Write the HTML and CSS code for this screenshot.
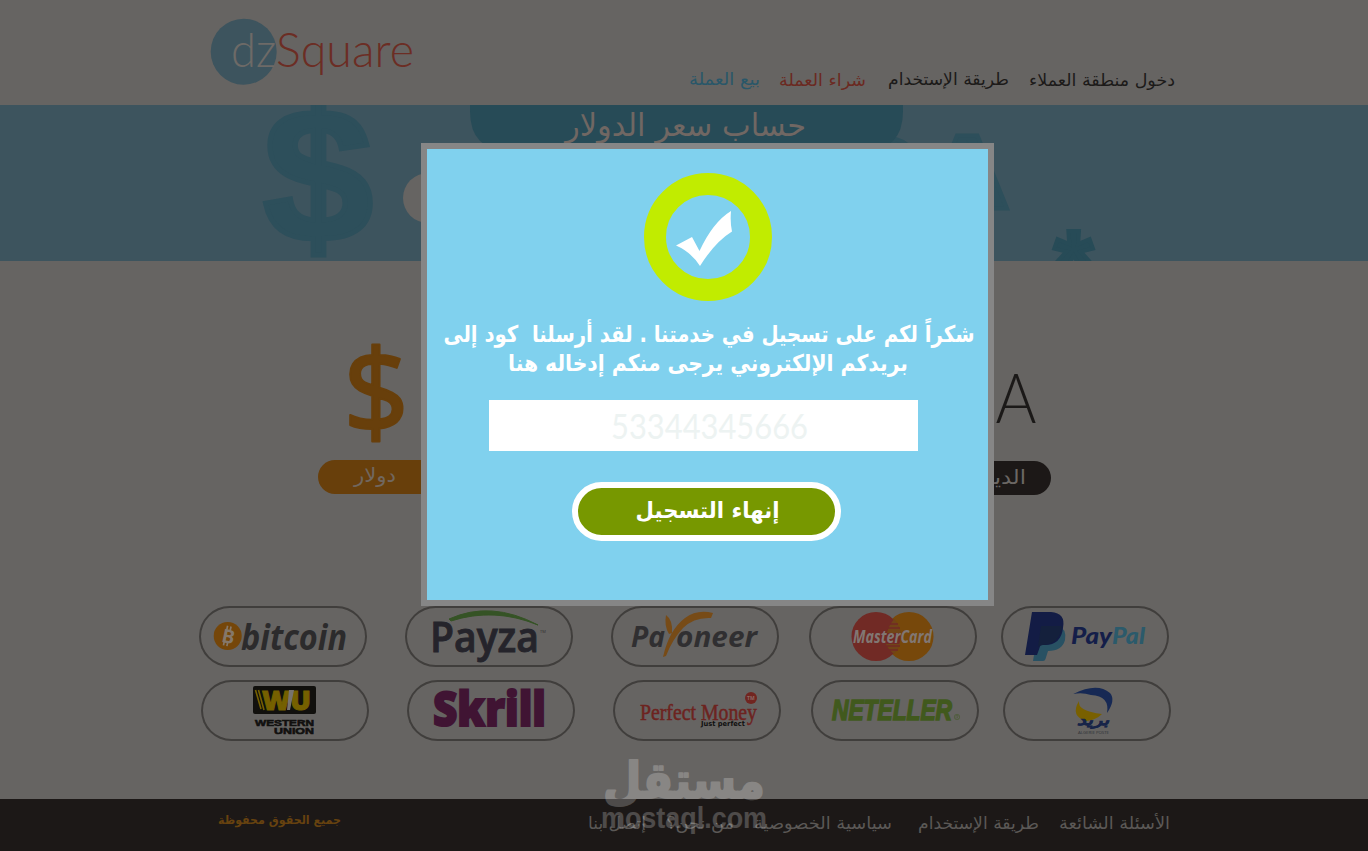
FILE: index.html
```html
<!DOCTYPE html>
<html lang="ar">
<head>
<meta charset="utf-8">
<title>dzSquare</title>
<link rel="stylesheet" href="styles.css">
</head>
<body>
<div class="page">
  <header class="header">
    <svg class="logo" width="204" height="70">
      <circle class="logo-disc" cx="32.7" cy="33.7" r="33"/>
      <text class="logo-dz" x="20" y="49" textLength="45" lengthAdjust="spacingAndGlyphs">dz</text>
      <text class="logo-square" x="65" y="49" textLength="138" lengthAdjust="spacingAndGlyphs">Square</text>
    </svg>
    <nav class="nav">
      <svg class="ar nav-blue" width="71" height="26"><text x="35.5" y="17" textLength="71" lengthAdjust="spacingAndGlyphs">بيع العملة</text></svg>
      <svg class="ar nav-red" width="87" height="26"><text x="43.5" y="18" textLength="87" lengthAdjust="spacingAndGlyphs">شراء العملة</text></svg>
      <svg class="ar nav-dark" width="121" height="26"><text x="60.5" y="17" textLength="121" lengthAdjust="spacingAndGlyphs">طريقة الإستخدام</text></svg>
      <svg class="ar nav-dark" width="146" height="26"><text x="73" y="18" textLength="146" lengthAdjust="spacingAndGlyphs">دخول منطقة العملاء</text></svg>
    </nav>
  </header>

  <section class="banner">
    <svg width="1368" height="156">
      <text class="ghost ghost-dollar" x="263" y="136" textLength="110" lengthAdjust="spacingAndGlyphs">$</text>
      <text class="ghost ghost-da" x="839" y="104" textLength="171" lengthAdjust="spacingAndGlyphs">DA</text>
      <text class="ghost-star" x="1054" y="194" textLength="39" lengthAdjust="spacingAndGlyphs">*</text>
      <circle class="banner-field" cx="428" cy="93" r="25"/>
      <path class="banner-tab" d="M470 0H903V6Q903 46 863 46H510Q470 46 470 6Z"/>
      <text class="ar-text banner-title" x="685.5" y="31" textLength="241" lengthAdjust="spacingAndGlyphs">حساب سعر الدولار</text>
    </svg>
  </section>

  <main class="main">
    <div class="currencies">
      <div class="currency">
        <svg width="210" height="199">
          <text class="sign-dollar" x="25" y="174" textLength="66" lengthAdjust="spacingAndGlyphs">$</text>
        </svg>
        <div class="pill pill-orange"><svg class="ar" width="42" height="34"><text x="21" y="22" textLength="42" lengthAdjust="spacingAndGlyphs">دولار</text></svg></div>
      </div>
      <div class="currency currency-right">
        <svg width="175" height="200">
          <text class="sign-da" x="73" y="162" textLength="87.500" lengthAdjust="spacingAndGlyphs">DA</text>
        </svg>
        <div class="pill pill-dark"><svg class="ar" width="56" height="34"><text x="28" y="23" textLength="56" lengthAdjust="spacingAndGlyphs">الدينار</text></svg></div>
      </div>
    </div>

    <div class="methods">
      <div class="row">
        <div class="method"><svg width="168" height="61">
          <circle cx="28.7" cy="30" r="14" fill="#754609"/>
          <g transform="rotate(12 28.7 30)"><text class="coin" x="23.2" y="37">B</text><path d="M26.5 20v4M30 20v4M26.5 36v4M30 36v4" stroke="#85786a" stroke-width="1.7"/></g>
          <text class="bitcoin" x="42" y="43.5" textLength="106" lengthAdjust="spacingAndGlyphs">bitcoin</text>
        </svg></div>
        <div class="method"><svg width="168" height="61">
          <text class="payza" x="25" y="46" textLength="109" lengthAdjust="spacingAndGlyphs">Payza</text>
          <path d="M44 13Q86-6 133 19Q89 1 46 15Z" fill="#355325" stroke="#355325"/>
          <text class="tiny" x="135" y="27">TM</text>
        </svg></div>
        <div class="method"><svg width="168" height="61">
          <text class="payoneer" x="20" y="41" textLength="34" lengthAdjust="spacingAndGlyphs">Pa</text>
          <text class="payoneer" x="65" y="41" textLength="81" lengthAdjust="spacingAndGlyphs">oneer</text>
          <path d="M55 9Q62 14 61 27L58 28Q53 20 55 9ZM52 51Q58 24 74 12Q86 3 102 7L100 12Q83 11 72 22Q61 34 55 50Z" fill="#774b17"/>
        </svg></div>
        <div class="method"><svg width="168" height="61">
          <circle cx="100" cy="30.5" r="24.5" fill="#77480b"/>
          <circle cx="67" cy="30.5" r="24.5" fill="#712a25"/>
          <path d="M85 13q-6 8-7 14h14q-2-8-7-14ZM77 38h14q-2 6-6 10q-6-5-8-10Z" fill="#714418"/>
          <path d="M81 18h8M79 22h12M78 40h13M80 44h9" stroke="#712a25" stroke-width="1.5"/>
          <text class="mastercard" x="44" y="37" textLength="79" lengthAdjust="spacingAndGlyphs">MasterCard</text>
        </svg></div>
        <div class="method"><svg width="168" height="61">
          <path d="M38 19H57Q66 23 64 34Q61 45 47 45L44.500 53Q44 55 42 55H32Z" fill="#285163"/>
          <path d="M31 6H50Q65 7 62 22Q60 39 44 39H41Q39 39 38.500 42L36 49H24Z" fill="#131c45"/>
          <path d="M40 20H61Q59 38 42 39Q39 39 37 41Z" fill="#14203c"/>
          <text class="paypal navy" x="70" y="38" textLength="41" lengthAdjust="spacingAndGlyphs">Pay</text>
          <text class="paypal sky" x="111" y="38" textLength="33" lengthAdjust="spacingAndGlyphs">Pal</text>
        </svg></div>
      </div>
      <div class="row row-second">
        <div class="method"><svg width="168" height="61">
          <rect x="52" y="6" width="63" height="28" rx="2" fill="#11100d"/>
          <path d="M54.500 10L60 29M57.500 10L63 30" stroke="#756000" stroke-width="1.6"/>
          <text class="wu" x="61" y="30" textLength="49" lengthAdjust="spacingAndGlyphs">WU</text>
          <path d="M88 10h5l-4 20h-3Z" fill="#77736f"/>
          <text class="western" x="54" y="45.500" textLength="59" lengthAdjust="spacingAndGlyphs">WESTERN</text>
          <text class="western" x="73" y="54" textLength="40" lengthAdjust="spacingAndGlyphs">UNION</text>
        </svg></div>
        <div class="method"><svg width="168" height="61">
          <text class="skrill" x="26" y="46" textLength="113" lengthAdjust="spacingAndGlyphs">Skrill</text>
        </svg></div>
        <div class="method"><svg width="168" height="61">
          <text class="perfect" x="27" y="39.500" textLength="117" lengthAdjust="spacingAndGlyphs">Perfect Money</text>
          <circle cx="138" cy="18" r="6" fill="#712520"/>
          <text class="tm" x="134" y="20">TM</text>
          <text class="just" x="88" y="45.500" textLength="44" lengthAdjust="spacingAndGlyphs">Just perfect</text>
        </svg></div>
        <div class="method"><svg width="168" height="61">
          <text class="neteller" x="21" y="39.500" textLength="120" lengthAdjust="spacingAndGlyphs">NETELLER</text>
          <circle cx="146" cy="37" r="2.700" fill="none" stroke="#4e5d39" stroke-width=".8"/>
          <path d="M145 39v-3.500h2v1.500h-1l1.500 2" fill="none" stroke="#4e5d39" stroke-width=".6"/>
        </svg></div>
        <div class="method"><svg width="168" height="61">
          <path d="M70.300 14Q94 2 107 13Q113 20 104 33Q107 16 88 15Q79 12 70.300 14Z" fill="#172954"/>
          <path d="M76 21Q74 31 99 34Q93 40 83 41Q67 36 76 21Z" fill="#796000"/>
          <text class="ar-text poste" x="90" y="44.500" textLength="32" lengthAdjust="spacingAndGlyphs">بريد</text>
          <text class="poste-small" x="75" y="53.500" textLength="31" lengthAdjust="spacingAndGlyphs">ALGERIE POSTE</text>
        </svg></div>
      </div>
    </div>
  </main>

  <footer class="footer">
    <svg class="ar copyright" width="123" height="30"><text x="61.500" y="16" textLength="123" lengthAdjust="spacingAndGlyphs">جميع الحقوق محفوظة</text></svg>
    <div class="footer-links">
      <svg class="ar" width="58" height="30"><text x="29" y="21" textLength="58" lengthAdjust="spacingAndGlyphs">إتصل بنا</text></svg>
      <svg class="ar" width="68" height="30"><text x="34" y="21" textLength="68" lengthAdjust="spacingAndGlyphs">من نحن؟</text></svg>
      <svg class="ar" width="138" height="30"><text x="69" y="21" textLength="138" lengthAdjust="spacingAndGlyphs">سياسية الخصوصية</text></svg>
      <svg class="ar link-usage" width="121" height="30"><text x="60.500" y="21" textLength="121" lengthAdjust="spacingAndGlyphs">طريقة الإستخدام</text></svg>
      <svg class="ar" width="111" height="30"><text x="55.500" y="21" textLength="111" lengthAdjust="spacingAndGlyphs">الأسئلة الشائعة</text></svg>
    </div>
  </footer>

  <svg class="watermark" width="168" height="85">
    <text class="ar-text mark-ar" x="84" y="43" textLength="162" lengthAdjust="spacingAndGlyphs">مستقل</text>
    <text class="mark-en" x="1" y="73" textLength="166" lengthAdjust="spacingAndGlyphs">mostaql.com</text>
  </svg>

  <section class="modal">
    <svg class="badge" width="128" height="128">
      <circle cx="64" cy="64" r="53" fill="none" stroke="#c1ec00" stroke-width="22"/>
      <path d="M32 72.500L48 64L55.500 78Q69 49 87 38Q86 50 88 58.500Q71 69 56 93Q47 79 32 72.500Z" fill="#fff"/>
    </svg>
    <svg class="message" width="561" height="90">
      <text class="ar-text" x="282" y="29" textLength="531" lengthAdjust="spacingAndGlyphs">شكراً لكم على تسجيل في خدمتنا . لقد أرسلنا &#160;كود إلى</text>
      <text class="ar-text" x="281" y="58" textLength="400" lengthAdjust="spacingAndGlyphs">بريدكم الإلكتروني يرجى منكم إدخاله هنا</text>
    </svg>
    <div class="code"><svg width="429" height="51"><text x="122" y="38.500" textLength="197" lengthAdjust="spacingAndGlyphs">53344345666</text></svg></div>
    <div class="submit"><svg class="ar" width="144" height="47"><text x="72.500" y="30" textLength="144" lengthAdjust="spacingAndGlyphs">إنهاء التسجيل</text></svg></div>
  </section>
</div>
</body>
</html>
```
FILE: styles.css
```css
* { box-sizing: border-box; }
body { margin: 0; background: #666462; font-family: "DejaVu Sans", sans-serif; }
svg { display: block; overflow: visible; flex: none; }
.page { position: relative; width: 1368px; height: 851px; overflow: hidden; background: #666462; }

.ar text, .ar-text { direction: rtl; text-anchor: middle; font-family: "DejaVu Sans", sans-serif; }

.header { height: 105px; padding: 18px 193px 0 211px; display: flex; justify-content: space-between; }
.logo text { font-family: Lato, sans-serif; font-weight: 300; font-size: 47px; }
.logo-disc { fill: #3d545e; }
.logo-dz { fill: #6d6a67; }
.logo-square { fill: #6c2d24; }
.nav { display: flex; padding-top: 50px; }
.nav svg { font-size: 17px; }
.nav svg:nth-child(2) { margin-left: 19px; }
.nav svg:nth-child(3) { margin-left: 22px; }
.nav svg:nth-child(4) { margin-left: 20px; }
.nav-blue { fill: #295769; }
.nav-red { fill: #6b2921; }
.nav-dark { fill: #1c1a19; }

.banner { height: 156px; overflow: hidden; background: #3d545e; }
.ghost { fill: #2d4f5b; stroke: #2d4f5b; font-family: "Liberation Sans", Arial, sans-serif; font-weight: 700; }
.ghost-dollar { font-size: 190px; stroke-width: 5px; }
.ghost-da { font-size: 106px; stroke-width: 4px; }
.ghost-star { fill: #274b57; stroke: #274b57; stroke-width: 4px; font-family: "Liberation Sans", Arial, sans-serif; font-weight: 700; font-size: 98px; }
.banner-field { fill: #666462; }
.banner-tab { fill: #274b57; }
.banner-title { fill: #706763; font-size: 31px; }

.main { height: 538px; display: flex; flex-direction: column; }
.currencies { height: 345px; padding: 0 317px 0 318px; display: flex; justify-content: space-between; }
.sign-dollar { fill: #683f0b; stroke: #683f0b; stroke-width: 2px; stroke-linejoin: round; font-family: "Noto Sans", sans-serif; font-size: 118px; }
.sign-da { fill: #1b1918; font-family: Lato, sans-serif; font-weight: 300; font-size: 69px; }
.pill { height: 34px; border-radius: 17px; display: flex; }
.pill-orange { width: 175px; padding-left: 36px; background: #683f0b; fill: #71675f; font-size: 20px; }
.pill-dark { width: 175px; padding-right: 25px; justify-content: flex-end; background: #1c1817; fill: #6b6764; font-size: 20px; }

.methods { padding-left: 199px; display: flex; flex-direction: column; gap: 13px; }
.row { display: grid; grid-template-columns: 206px 206px 198px 192px 168px; }
.row-second { padding-left: 2px; }
.method { width: 168px; height: 61px; border-radius: 31px; box-shadow: inset 0 0 0 2px #403e3c; }
.method text { font-family: "Open Sans", sans-serif; }
.method .coin { font: 700 19px "Open Sans", sans-serif; fill: #85786a; }
.bitcoin { font-size: 36px; font-weight: 700; font-style: italic; fill: #2c2b2c; }
.payza { font-size: 41px; font-weight: 600; fill: #25242b; stroke: #25242b; stroke-width: .9px; }
.tiny { font-size: 4px; fill: #33312f; }
.payoneer { font-size: 28px; font-weight: 700; font-style: italic; fill: #302f31; }
.mastercard { font-size: 18px; font-weight: 700; font-style: italic; fill: #817773; }
.method .paypal { font-family: Lato, sans-serif; font-size: 22.5px; font-weight: 900; font-style: italic; }
.navy { fill: #141e49; }
.sky { fill: #2b5a6b; }
.wu { font-size: 27px; font-weight: 800; fill: #756000; stroke: #756000; }
.method .western { font-family: "Liberation Sans", Arial, sans-serif; font-size: 9.5px; font-weight: 700; fill: #11100f; stroke: #11100f; stroke-width: .6px; }
.skrill { font-size: 47px; font-weight: 800; fill: #401433; stroke: #401433; stroke-width: 2px; }
.method .perfect { font-family: "Liberation Serif", serif; font-size: 23px; fill: #6d231f; stroke: #6d231f; stroke-width: .5px; }
.tm { font-size: 5px; font-weight: 700; fill: #8b6b65; }
.method .just { font-family: "DejaVu Sans", sans-serif; font-size: 7px; font-weight: 700; fill: #100f0f; }
.method .neteller { font-family: "Liberation Sans", Arial, sans-serif; font-size: 30px; font-weight: 700; font-style: italic; fill: #41591d; stroke: #41591d; stroke-width: 1.6px; }
.method .poste { font-family: "DejaVu Sans", sans-serif; font-size: 14px; font-weight: 700; font-style: italic; fill: #172448; stroke: #172448; stroke-width: .5px; }
.poste-small { font-size: 4px; fill: #2e3237; }

.footer { height: 52px; padding: 0 198px 0 218px; display: flex; justify-content: space-between; align-items: flex-start; background: #1c1817; }
.footer svg { margin-top: 9px; font-size: 17px; fill: #5b5856; }
.footer .copyright { font-size: 12px; font-weight: 700; fill: #67420f; }
.footer-links { display: flex; gap: 20px; }
.footer-links .link-usage { margin-left: 6px; }

.watermark { position: absolute; left: 600px; top: 755px; fill: #fff; opacity: .22; }
.mark-ar { font-size: 50px; font-weight: 700; stroke: #fff; stroke-width: 2px; stroke-linejoin: round; }
.mark-en { font: 700 29px "Liberation Sans", Arial, sans-serif; }

.modal { position: absolute; left: 421px; top: 143px; width: 573px; height: 463px; border: 6px solid #868686; background: #80d1ee; }
.badge { margin: 24px 0 0 217px; }
.message { margin-top: 12px; height: 87px; fill: #fff; font-size: 23px; font-weight: 700; }
.code { width: 429px; height: 51px; margin-left: 62px; background: #fff; }
.code text { font-family: Lato, sans-serif; font-size: 35px; fill: #edf3f2; }
.submit { width: 269px; height: 59px; margin: 31px 0 0 145px; padding-left: 57px; border: 6px solid #fff; border-radius: 30px; background: #779800; fill: #fff; font-size: 22px; font-weight: 700; }
```
